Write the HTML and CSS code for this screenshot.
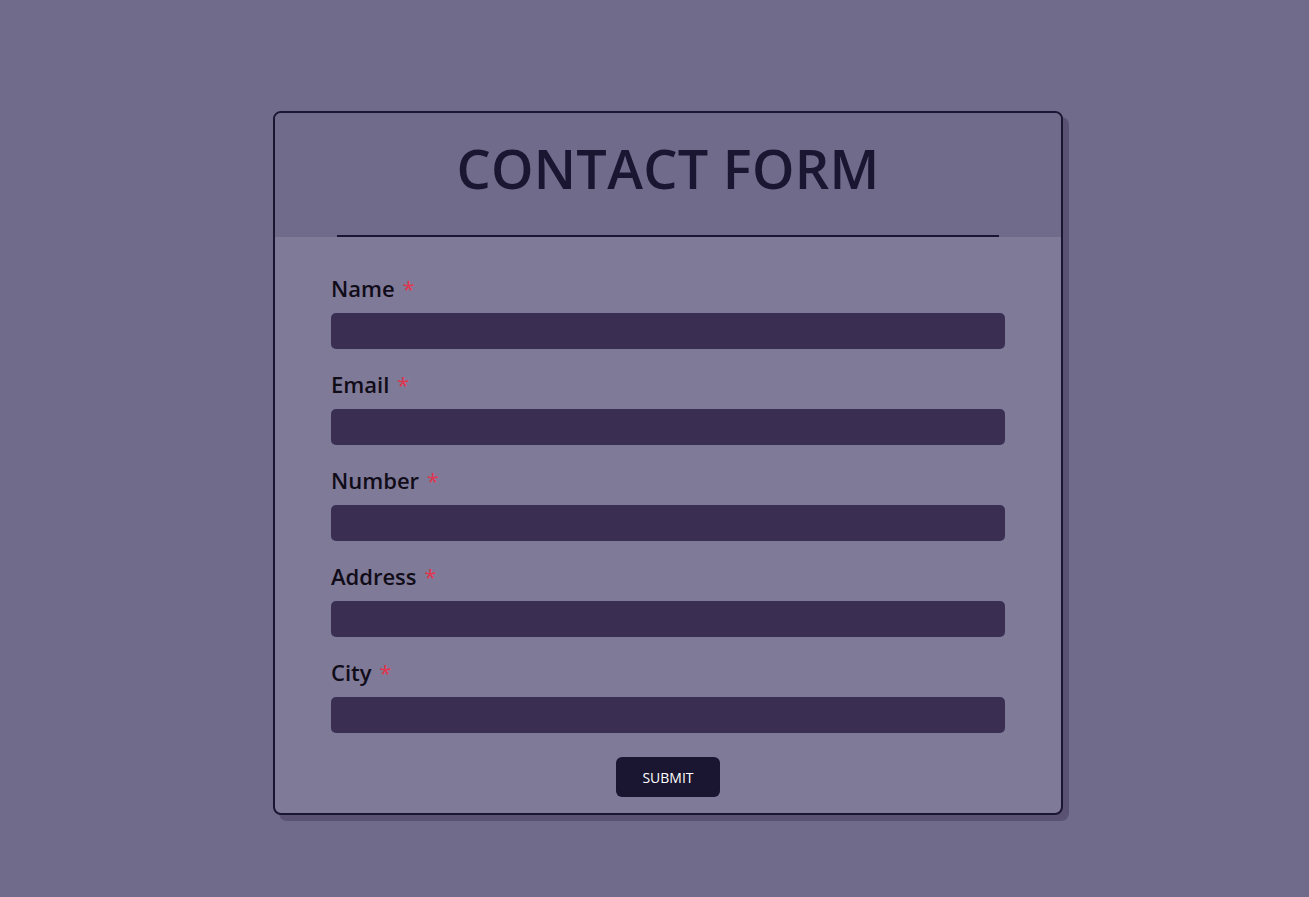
FILE: index.html
```html
<!DOCTYPE html>
<html>
<head>
<meta charset="utf-8">
<link rel="stylesheet" href="styles.css">
</head>
<body>
<div class="card">
  <div class="card-head">
    <h1 class="title">CONTACT FORM</h1>
    <div class="divider"></div>
  </div>
  <form class="form">
    <div class="field">
      <label class="label">Name <span class="req">*</span></label>
      <input class="input" type="text">
    </div>
    <div class="field">
      <label class="label">Email <span class="req">*</span></label>
      <input class="input" type="text">
    </div>
    <div class="field">
      <label class="label">Number <span class="req">*</span></label>
      <input class="input" type="text">
    </div>
    <div class="field">
      <label class="label">Address <span class="req">*</span></label>
      <input class="input" type="text">
    </div>
    <div class="field">
      <label class="label">City <span class="req">*</span></label>
      <input class="input" type="text">
    </div>
    <div class="actions">
      <button class="submit" type="button">SUBMIT</button>
    </div>
  </form>
</div>
</body>
</html>
```

FILE: styles.css
```css
html, body {
  margin: 0;
  padding: 0;
}
body {
  background: #706a8b;
  font-family: "Open Sans", "Noto Sans", sans-serif;
  min-height: 897px;
  padding-top: 111px;
  box-sizing: border-box;
}
.card {
  width: 790px;
  box-sizing: border-box;
  margin-left: 273px;
  border: 2px solid #1a1530;
  border-radius: 8px;
  background: #807a99;
  box-shadow: 6px 6px 0 #595273;
  overflow: hidden;
}
.card-head {
  background: #706a8b;
  padding-top: 17px;
  display: flex;
  flex-direction: column;
  align-items: center;
}
.title {
  margin: 0;
  font-size: 54px;
  font-weight: 600;
  line-height: 76px;
  color: #1a1530;
  letter-spacing: 0.3px;
}
.divider {
  width: 662px;
  height: 2px;
  background: #1a1530;
  margin-top: 29px;
}
.form {
  padding: 40px 56px 16px 56px;
  display: flex;
  flex-direction: column;
}
.field {
  display: flex;
  flex-direction: column;
  margin-bottom: 24px;
}
.label {
  font-size: 22px;
  font-weight: 600;
  line-height: 22px;
  color: #100c18;
  margin-bottom: 14px;
  word-spacing: 2px;
}
.req {
  color: #e2344c;
  font-weight: 400;
}
.input {
  height: 36px;
  box-sizing: border-box;
  border: none;
  border-radius: 5px;
  background: #3a2e52;
  margin: 0;
}
.actions {
  display: flex;
  justify-content: center;
}
.submit {
  width: 104px;
  height: 40px;
  background: #1a1530;
  color: #ffffff;
  border: none;
  border-radius: 6px;
  font-family: "Open Sans", "Noto Sans", sans-serif;
  font-size: 14px;
  cursor: pointer;
}
```
